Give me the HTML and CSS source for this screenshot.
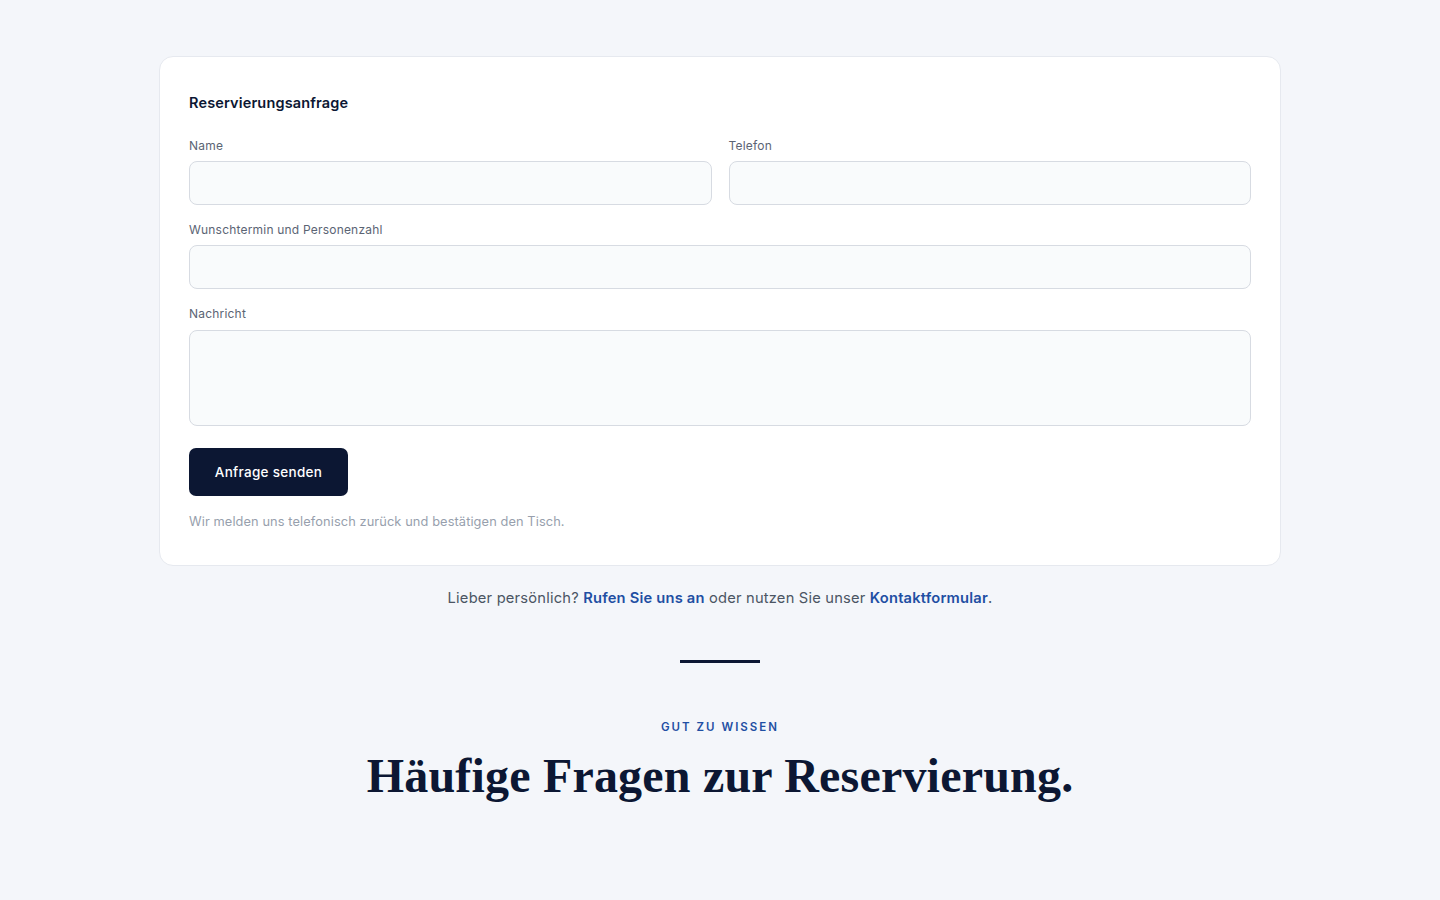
FILE: index.html
```html
<!DOCTYPE html>
<html lang="de">
<head>
<meta charset="utf-8">
<title>Reservierung</title>
<link rel="stylesheet" href="styles.css">
</head>
<body>
<main class="page">
  <section class="card">
    <h2 class="card-title">Reservierungsanfrage</h2>
    <form class="form">
      <div class="row">
        <label class="field">
          <span class="label">Name</span>
          <input class="input" type="text">
        </label>
        <label class="field">
          <span class="label">Telefon</span>
          <input class="input" type="tel">
        </label>
      </div>
      <label class="field">
        <span class="label">Wunschtermin und Personenzahl</span>
        <input class="input" type="text">
      </label>
      <label class="field">
        <span class="label">Nachricht</span>
        <textarea class="input textarea"></textarea>
      </label>
      <div class="actions">
        <button class="button" type="button">Anfrage senden</button>
      </div>
      <p class="note">Wir melden uns telefonisch zurück und bestätigen den Tisch.</p>
    </form>
  </section>

  <p class="alt">Lieber persönlich? <a href="#" class="link">Rufen Sie uns an</a> oder nutzen Sie unser <a href="#" class="link">Kontaktformular</a>.</p>

  <hr class="divider">

  <header class="faq-head">
    <p class="eyebrow">GUT ZU WISSEN</p>
    <h1 class="faq-title">Häufige Fragen zur Reservierung.</h1>
  </header>
</main>
</body>
</html>
```
FILE: styles.css
```css
* { box-sizing: border-box; }

html, body {
  margin: 0;
  padding: 0;
  background: #f4f6fa;
  color: #0c1733;
  font-family: "Inter", "Open Sans", sans-serif;
}

.page {
  display: flex;
  flex-direction: column;
  align-items: center;
  padding-top: 56px;
}

.card {
  width: 1122px;
  background: #ffffff;
  border: 1px solid #e6e9ef;
  border-radius: 14px;
  padding: 35px 29px 34px;
}

.card-title {
  margin: 0 0 24px;
  font-size: 14.5px;
  line-height: 22px;
  font-weight: 600;
  letter-spacing: 0.15px;
  color: #0c1733;
}

.form {
  display: flex;
  flex-direction: column;
  gap: 17px;
}

.row {
  display: grid;
  grid-template-columns: 1fr 1fr;
  gap: 17px;
}

.field {
  display: flex;
  flex-direction: column;
  gap: 7px;
}

.label {
  font-size: 12px;
  line-height: 16px;
  color: #5b6474;
  letter-spacing: 0.2px;
}

.input {
  display: block;
  width: 100%;
  height: 44px;
  border: 1px solid #d7dbe2;
  border-radius: 8px;
  background: #f9fbfc;
  font: inherit;
  outline: none;
}

.textarea {
  height: 96px;
  margin-top: 1px;
  resize: none;
}

.actions {
  padding-top: 5px;
}

.button {
  display: block;
  width: 159px;
  height: 48px;
  border: 0;
  border-radius: 7px;
  background: #0c1733;
  color: #ffffff;
  font-family: inherit;
  font-size: 13.5px;
  font-weight: 500;
  letter-spacing: 0.3px;
}

.note {
  margin: 0;
  font-size: 12.8px;
  line-height: 18px;
  color: #979fad;
  letter-spacing: 0.1px;
}

.alt {
  margin: 21px 0 0;
  font-size: 14.7px;
  line-height: 22px;
  color: #4b5563;
  letter-spacing: 0.2px;
}

.link {
  color: #1f4fa3;
  font-weight: 600;
  text-decoration: none;
}

.divider {
  width: 80px;
  height: 3px;
  margin: 51px 0 0;
  border: 0;
  background: #0c1733;
}

.faq-head {
  text-align: center;
  margin-top: 56px;
}

.eyebrow {
  margin: 0;
  font-size: 11.5px;
  line-height: 16px;
  font-weight: 600;
  letter-spacing: 2px;
  color: #1f4fa3;
}

.faq-title {
  margin: 13px 0 0;
  font-family: "Liberation Serif", "DejaVu Serif", serif;
  font-size: 48px;
  line-height: 56px;
  font-weight: 700;
  letter-spacing: 0.2px;
  color: #0c1733;
}
```
